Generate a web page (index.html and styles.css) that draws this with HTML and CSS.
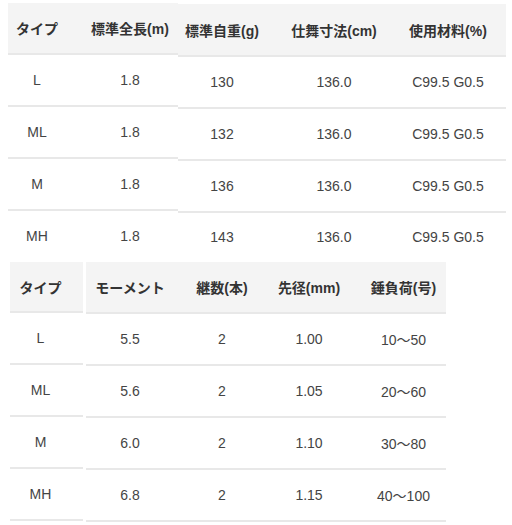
FILE: index.html
```html
<!DOCTYPE html>
<html lang="ja">
<head>
<meta charset="utf-8">
<title>スペック</title>
<link rel="stylesheet" href="styles.css">
</head>
<body>
<div class="spec spec-a">
  <table class="fixed fixed-a">
    <colgroup><col class="a1"><col class="a2"></colgroup>
    <thead><tr><th>タイプ</th><th class="pl16">標準全長(m)</th></tr></thead>
    <tbody>
      <tr><td>L</td><td class="pl16">1.8</td></tr>
      <tr><td>ML</td><td class="pl16">1.8</td></tr>
      <tr><td>M</td><td class="pl16">1.8</td></tr>
      <tr class="last"><td>MH</td><td class="pl16">1.8</td></tr>
    </tbody>
  </table>
  <table class="scroll scroll-a">
    <colgroup><col class="a3"><col class="a4"><col class="a5"></colgroup>
    <thead><tr><th>標準自重(g)</th><th>仕舞寸法(cm)</th><th class="pr12">使用材料(%)</th></tr></thead>
    <tbody>
      <tr><td>130</td><td>136.0</td><td class="pr12">C99.5 G0.5</td></tr>
      <tr><td>132</td><td>136.0</td><td class="pr12">C99.5 G0.5</td></tr>
      <tr><td>136</td><td>136.0</td><td class="pr12">C99.5 G0.5</td></tr>
      <tr class="last"><td>143</td><td>136.0</td><td class="pr12">C99.5 G0.5</td></tr>
    </tbody>
  </table>
</div>
<div class="spec spec-b">
  <table class="fixed fixed-b">
    <colgroup><col class="b1"></colgroup>
    <thead><tr><th class="pr12">タイプ</th></tr></thead>
    <tbody>
      <tr><td class="pr12">L</td></tr>
      <tr><td class="pr12">ML</td></tr>
      <tr><td class="pr12">M</td></tr>
      <tr><td class="pr12">MH</td></tr>
    </tbody>
  </table>
  <table class="scroll scroll-b">
    <colgroup><col class="b2"><col class="b3"><col class="b4"><col class="b5"></colgroup>
    <thead><tr><th>モーメント</th><th>継数(本)</th><th>先径(mm)</th><th class="pl13">錘負荷(号)</th></tr></thead>
    <tbody>
      <tr><td>5.5</td><td>2</td><td>1.00</td><td class="pl13">10〜50</td></tr>
      <tr><td>5.6</td><td>2</td><td>1.05</td><td class="pl13">20〜60</td></tr>
      <tr><td>6.0</td><td>2</td><td>1.10</td><td class="pl13">30〜80</td></tr>
      <tr><td>6.8</td><td>2</td><td>1.15</td><td class="pl13">40〜100</td></tr>
    </tbody>
  </table>
</div>
</body>
</html>
```
FILE: styles.css
```css
html, body {
  margin: 0;
  padding: 0;
  background: #fff;
}
body {
  font-family: "Liberation Sans", Arial, "Noto Sans CJK JP", sans-serif;
  font-size: 14px;
  color: #444;
}
.spec {
  display: flex;
  align-items: flex-start;
}
.spec-a {
  padding: 3px 0 0 8px;
}
.spec-b {
  padding-left: 10px;
}
table {
  border-collapse: separate;
  border-spacing: 0;
  table-layout: fixed;
}
th, td {
  box-sizing: border-box;
  padding: 0;
  text-align: center;
  vertical-align: middle;
  border-bottom: 2px solid #e8e8e8;
  height: 52px;
  white-space: nowrap;
}
th {
  background: #f4f4f4;
  font-weight: bold;
  color: #333;
}
tr.last td {
  border-bottom-color: transparent;
  height: 51px;
}
.scroll-a {
  margin-top: 1px;
}
.scroll-a th {
  height: 53px;
}
.scroll-a tr.last td {
  height: 49px;
}
.fixed-b th {
  height: 51px;
}
.scroll-b {
  margin-left: 3px;
}
.fixed-a { width: 170px; }
.a1 { width: 58px; }
.a2 { width: 112px; }
.scroll-a { width: 328px; }
.a3 { width: 88px; }
.a4 { width: 136px; }
.a5 { width: 104px; }
.fixed-b { width: 73px; }
.b1 { width: 73px; }
.scroll-b { width: 360px; }
.b2 { width: 88px; }
.b3 { width: 96px; }
.b4 { width: 78px; }
.b5 { width: 98px; }
.pl16 { padding-left: 16px; }
.pr12 { padding-right: 12px; }
.pl13 { padding-left: 13px; }
```
